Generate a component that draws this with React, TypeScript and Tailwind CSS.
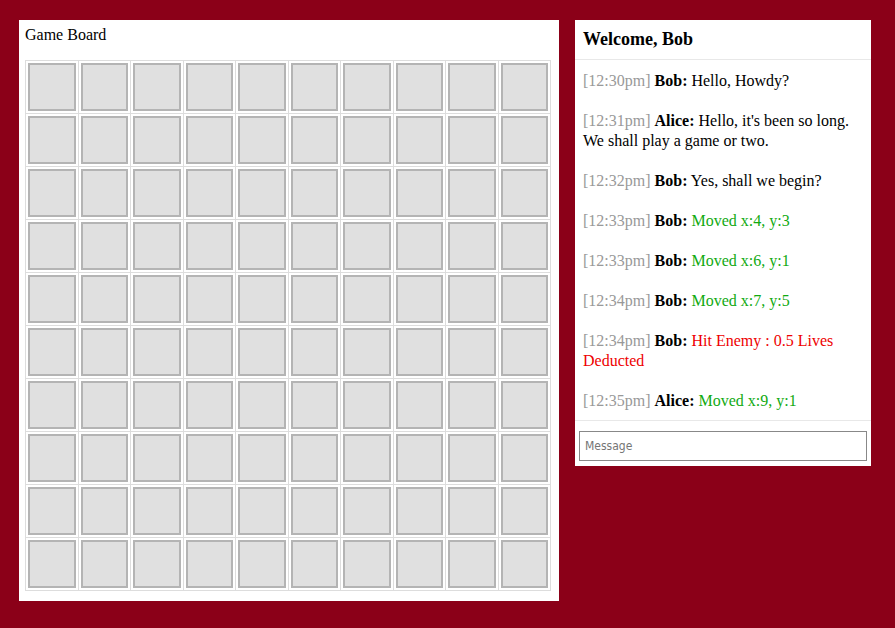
import React from "react";

type Msg = { t: string; who: string; text: string; kind: "chat" | "move" | "hit" };

const msgs: Msg[] = [
  { t: "12:30pm", who: "Bob", text: "Hello, Howdy?", kind: "chat" },
  { t: "12:31pm", who: "Alice", text: "Hello, it's been so long. We shall play a game or two.", kind: "chat" },
  { t: "12:32pm", who: "Bob", text: "Yes, shall we begin?", kind: "chat" },
  { t: "12:33pm", who: "Bob", text: "Moved x:4, y:3", kind: "move" },
  { t: "12:33pm", who: "Bob", text: "Moved x:6, y:1", kind: "move" },
  { t: "12:34pm", who: "Bob", text: "Moved x:7, y:5", kind: "move" },
  { t: "12:34pm", who: "Bob", text: "Hit Enemy : 0.5 Lives Deducted", kind: "hit" },
  { t: "12:35pm", who: "Alice", text: "Moved x:9, y:1", kind: "move" },
];

export default function App() {
  const cells = Array.from({ length: 100 }, (_, i) => i);
  return (
    <div
      className="min-h-[628px] w-full bg-[#8b0018] flex items-start gap-4 pl-[19px] pt-5 text-black"
      style={{ fontFamily: '"Liberation Serif", "Times New Roman", serif' }}
    >
      <div className="w-[540px] bg-white pl-[6px] pr-[8px] pt-[6px] pb-[10px]">
        <div className="text-[16px] leading-[18px] mb-4">Game Board</div>
        <div className="grid grid-cols-10 gap-px bg-[#dddddd] p-px">
          {cells.map((i) => (
            <div key={i} className="bg-white p-[2px]">
              <div className="h-[48px] border-2 border-[#b4b4b4] bg-[#e0e0e0]" />
            </div>
          ))}
        </div>
      </div>
      <div className="w-[296px] bg-white flex flex-col">
        <div className="h-[40px] flex items-center px-2 border-b border-[#e8e8e8] text-[18px] font-bold">
          Welcome, Bob
        </div>
        <div className="flex flex-col gap-5 px-2 pt-[11px] pb-[9px] text-[16px] leading-[20px]">
          {msgs.map((m, i) => (
            <div key={i}>
              <span className="text-[#999999]">[{m.t}]</span>{" "}
              <span className="font-bold">{m.who}:</span>{" "}
              <span
                className={
                  m.kind === "move"
                    ? "text-[#11aa11]"
                    : m.kind === "hit"
                    ? "text-[#ee0000]"
                    : "text-black"
                }
              >
                {m.text}
              </span>
            </div>
          ))}
        </div>
        <div className="border-t border-[#e8e8e8] px-1 pt-[10px] pb-[5px]">
          <input
            placeholder="Message"
            className="w-full h-[30px] border border-[#888888] px-[5px] text-[12px] outline-none placeholder:text-[#757575]"
            style={{ fontFamily: '"DejaVu Sans Condensed", "DejaVu Sans", Verdana, sans-serif' }}
          />
        </div>
      </div>
    </div>
  );
}
